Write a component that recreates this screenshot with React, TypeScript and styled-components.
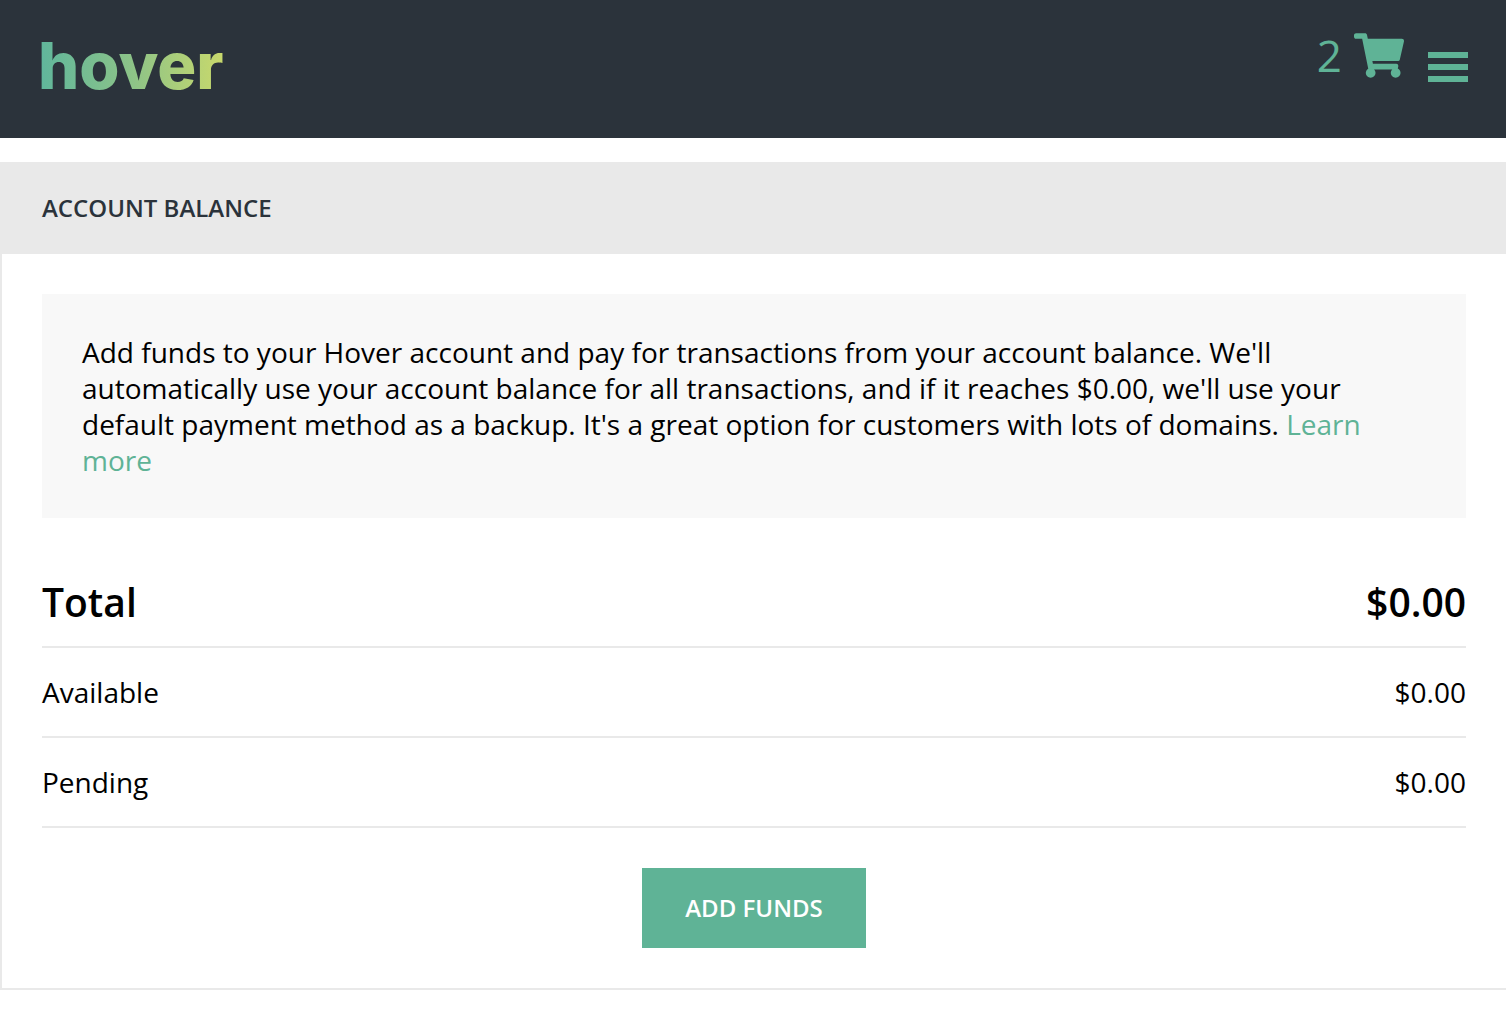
import React from "react";
import styled, { createGlobalStyle } from "styled-components";
import { FaShoppingCart } from "react-icons/fa";

const color = {
  ink: "#2b333b",
  accent: "#5fb396",
  line: "#e9e9e9",
  soft: "#f8f8f8",
};

const GlobalStyle = createGlobalStyle`
  *, *::before, *::after { box-sizing: border-box; }
  body {
    margin: 0;
    background: #fff;
    color: #000;
    font-family: "Open Sans", "Noto Sans", sans-serif;
    font-size: 28px;
    line-height: 36px;
  }
`;

const TopBar = styled.header`
  display: flex;
  justify-content: space-between;
  align-items: flex-start;
  height: 138px;
  padding: 26px 38px 0;
  background: ${color.ink};
`;

const Logo = styled.a`
  font-family: Inter, sans-serif;
  font-size: 65px;
  font-weight: 800;
  line-height: 80px;
  text-decoration: none;
  color: transparent;
  background: linear-gradient(90deg, #5fb69c, #8cc388 50%, #c9d96c);
  background-clip: text;
  -webkit-background-clip: text;
`;

const Actions = styled.nav`
  display: flex;
  align-items: flex-start;
  gap: 24px;
`;

const CartLink = styled.a`
  display: flex;
  align-items: center;
  gap: 12px;
  height: 58px;
  color: ${color.accent};
  font-size: 44px;
  text-decoration: none;

  svg {
    width: 50px;
    height: 45px;
  }
`;

const MenuButton = styled.button`
  display: flex;
  flex-direction: column;
  gap: 6px;
  width: 40px;
  margin: 0;
  padding: 26px 0;
  border: 0;
  background: none;
  cursor: pointer;
`;

const MenuBar = styled.span`
  width: 100%;
  height: 6px;
  background: ${color.accent};
`;

const Panel = styled.main`
  margin: 24px 0 32px;
  border: solid ${color.line};
  border-width: 0 0 2px 2px;
`;

const PanelTitle = styled.h1`
  margin: 0;
  padding: 28px 40px;
  background: ${color.line};
  color: ${color.ink};
  font-size: 24px;
  font-weight: 600;
  line-height: 36px;
  text-transform: uppercase;
`;

const PanelBody = styled.div`
  display: flex;
  flex-direction: column;
  gap: 40px;
  padding: 40px;
`;

const Notice = styled.p`
  margin: 0;
  padding: 40px;
  background: ${color.soft};
`;

const TextLink = styled.a`
  color: ${color.accent};
  text-decoration: none;
`;

const Balances = styled.table`
  width: 100%;
  border-collapse: separate;
  border-spacing: 0;
`;

const Row = styled.tr<{ $total?: boolean }>`
  font-size: ${(p) => (p.$total ? "39px" : "28px")};
  font-weight: ${(p) => (p.$total ? 600 : 400)};
`;

const Label = styled.th`
  height: 90px;
  padding: 0;
  border-bottom: 2px solid ${color.line};
  font-weight: inherit;
  text-align: left;
`;

const Amount = styled.td`
  padding: 0;
  border-bottom: 2px solid ${color.line};
  text-align: right;
`;

const PrimaryButton = styled.button`
  align-self: center;
  min-width: 224px;
  margin: 0;
  padding: 22px 40px;
  border: 0;
  background: ${color.accent};
  color: #fff;
  font: 600 24px/36px "Open Sans", "Noto Sans", sans-serif;
  text-transform: uppercase;
  cursor: pointer;
`;

const balances = [
  { label: "Total", amount: "$0.00", total: true },
  { label: "Available", amount: "$0.00" },
  { label: "Pending", amount: "$0.00" },
];

export default function App() {
  return (
    <>
      <GlobalStyle />
      <TopBar>
        <Logo href="#home">hover</Logo>
        <Actions>
          <CartLink href="#cart">
            <span>2</span>
            <FaShoppingCart aria-hidden="true" />
          </CartLink>
          <MenuButton type="button" aria-label="Menu">
            <MenuBar />
            <MenuBar />
            <MenuBar />
          </MenuButton>
        </Actions>
      </TopBar>
      <Panel>
        <PanelTitle>Account balance</PanelTitle>
        <PanelBody>
          <Notice>
            Add funds to your Hover account and pay for transactions from your
            account balance. We'll automatically use your account balance for
            all transactions, and if it reaches $0.00, we'll use your default
            payment method as a backup. It's a great option for customers with
            lots of domains. <TextLink href="#learn-more">Learn more</TextLink>
          </Notice>
          <Balances>
            <tbody>
              {balances.map((b) => (
                <Row key={b.label} $total={b.total}>
                  <Label scope="row">{b.label}</Label>
                  <Amount>{b.amount}</Amount>
                </Row>
              ))}
            </tbody>
          </Balances>
          <PrimaryButton type="button">Add funds</PrimaryButton>
        </PanelBody>
      </Panel>
    </>
  );
}
